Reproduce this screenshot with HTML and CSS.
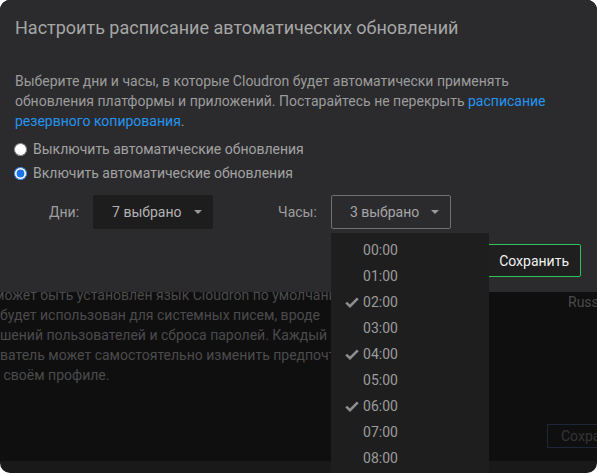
FILE: index.html
```html
<!DOCTYPE html>
<html lang="ru">
<head>
<meta charset="utf-8">
<title>Расписание обновлений</title>
<link rel="stylesheet" href="styles.css">
</head>
<body>
<div class="screen">
  <div class="page">
    <div class="card">
      <div class="card-text">
        <div class="ln ln-first">может быть установлен язык Cloudron по умолчанию, который</div>
        <div class="ln">будет использован для системных писем, вроде</div>
        <div class="ln">шений пользователей и сброса паролей. Каждый</div>
        <div class="ln">ватель может самостоятельно изменить предпочтение</div>
        <div class="ln ln-last">в своём профиле.</div>
      </div>
      <div class="card-side">
        <div class="lang">Russian</div>
        <div class="ghost-btn">Сохранить</div>
      </div>
    </div>
  </div>

  <div class="modal">
    <div class="modal-header">
      <h4 class="modal-title">Настроить расписание автоматических обновлений</h4>
    </div>
    <div class="modal-body">
      <p class="intro">Выберите дни и часы, в которые Cloudron будет автоматически применять обновления платформы и приложений. Постарайтесь не перекрыть <a href="#" class="link">расписание резервного копирования</a>.</p>
      <label class="radio"><input type="radio" name="upd"> <span>Выключить автоматические обновления</span></label>
      <label class="radio"><input type="radio" name="upd" checked> <span>Включить автоматические обновления</span></label>
      <div class="schedule">
        <div class="field">
          <span class="field-label">Дни:</span>
          <button class="select select-days">7 выбрано <span class="caret"></span></button>
        </div>
        <div class="field field-hours">
          <span class="field-label">Часы:</span>
          <button class="select select-hours">3 выбрано <span class="caret"></span></button>
          <ul class="menu">
            <li class="item"><span class="check"></span>00:00</li>
            <li class="item"><span class="check"></span>01:00</li>
            <li class="item"><span class="check"><svg viewBox="0 0 14 11" width="14" height="11"><path d="M1.2 5.6 L5 9.2 L12.8 1.4" fill="none" stroke="currentColor" stroke-width="2.6"/></svg></span>02:00</li>
            <li class="item"><span class="check"></span>03:00</li>
            <li class="item"><span class="check"><svg viewBox="0 0 14 11" width="14" height="11"><path d="M1.2 5.6 L5 9.2 L12.8 1.4" fill="none" stroke="currentColor" stroke-width="2.6"/></svg></span>04:00</li>
            <li class="item"><span class="check"></span>05:00</li>
            <li class="item"><span class="check"><svg viewBox="0 0 14 11" width="14" height="11"><path d="M1.2 5.6 L5 9.2 L12.8 1.4" fill="none" stroke="currentColor" stroke-width="2.6"/></svg></span>06:00</li>
            <li class="item"><span class="check"></span>07:00</li>
            <li class="item"><span class="check"></span>08:00</li>
            <li class="item"><span class="check"></span>09:00</li>
          </ul>
        </div>
      </div>
    </div>
    <div class="modal-footer">
      <button class="btn-save">Сохранить</button>
    </div>
  </div>
</div>
</body>
</html>
```

FILE: styles.css
```css
html, body {
  margin: 0;
  padding: 0;
  background: #ffffff;
}

body {
  font-family: Roboto, "Liberation Sans", Arial, sans-serif;
  font-size: 14px;
  line-height: 20px;
}

.screen {
  position: relative;
  width: 597px;
  height: 473px;
  border-radius: 10px;
  overflow: hidden;
  background: #19191a;
}

/* background page under the backdrop */
.page {
  height: 461px;
  background: #0f0f10;
}

.card {
  display: flex;
  justify-content: space-between;
  padding-top: 285px;
}

.card-text {
  color: #4b4b4b;
  white-space: nowrap;
  overflow: hidden;
  width: 340px;
}

.ln-first {
  margin-left: -6px;
}

.ln-last {
  margin-left: -8px;
}

.card-side {
  width: 50px;
  display: flex;
  flex-direction: column;
  align-items: flex-start;
  white-space: nowrap;
}

.lang {
  margin-top: 7px;
  padding-left: 21px;
  color: #4a4a4a;
}

.ghost-btn {
  margin-top: 112px;
  height: 22px;
  line-height: 22px;
  padding: 0 13px;
  border: 1px solid #1b2838;
  border-right: 0;
  color: #353535;
}

/* modal */
.modal {
  position: absolute;
  top: 0;
  left: 0;
  width: 597px;
  height: 292px;
  background: #2b2b2d;
  display: flex;
  flex-direction: column;
}

.modal-header {
  padding: 15px 15px 13px;
}

.modal-title {
  margin: 0;
  font-size: 18px;
  font-weight: 400;
  line-height: 26px;
  color: #a6a6a6;
}

.modal-body {
  padding: 17px 15px 0;
}

.intro {
  margin: 0 0 6px;
  color: #9c9c9c;
}

.link {
  color: #2594f0;
  text-decoration: none;
}

.radio {
  display: flex;
  align-items: center;
  height: 24px;
  color: #a2a2a2;
  margin-left: -1px;
}

.radio input {
  width: 13px;
  height: 13px;
  margin: 0 6px 0 0;
  accent-color: #1a73e8;
}

.schedule {
  display: flex;
  align-items: center;
  gap: 65px;
  margin-top: 10px;
  padding-left: 34px;
}

.field {
  display: flex;
  align-items: center;
  gap: 14px;
}

.field-hours {
  position: relative;
}

.field-label {
  color: #9e9e9e;
}

.select {
  display: flex;
  align-items: center;
  box-sizing: border-box;
  width: 120px;
  height: 34px;
  padding: 0 0 0 18px;
  font-family: inherit;
  font-size: 14px;
  border-radius: 2px;
  cursor: pointer;
}

.select-days {
  background: #1d1d1e;
  border: 0;
  color: #b3b3b3;
  padding-left: 19px;
}

.select-hours {
  background: transparent;
  border: 1px solid #707070;
  color: #a6a6a6;
}

.caret {
  display: inline-block;
  width: 0;
  height: 0;
  margin-left: auto;
  margin-right: 11px;
  border-top: 4px solid #9a9a9a;
  border-left: 4px solid transparent;
  border-right: 4px solid transparent;
}

.menu {
  position: absolute;
  top: 38px;
  left: 53px;
  width: 158px;
  margin: 0;
  padding: 4px 0;
  list-style: none;
  background: #1e1e1e;
  z-index: 5;
}

.item {
  display: flex;
  align-items: center;
  height: 26px;
  padding-left: 14px;
  color: #9c9c9c;
}

.check {
  display: flex;
  align-items: center;
  width: 18px;
  color: #8e8e8e;
}

.modal-footer {
  display: flex;
  justify-content: flex-end;
  padding: 15px 16px 15px;
}

.btn-save {
  height: 33px;
  padding: 0 11px;
  font-family: inherit;
  font-size: 14px;
  color: #f0f0f0;
  background: #1f1f1f;
  border: 1px solid #2ec45a;
  border-radius: 2px;
}
```
